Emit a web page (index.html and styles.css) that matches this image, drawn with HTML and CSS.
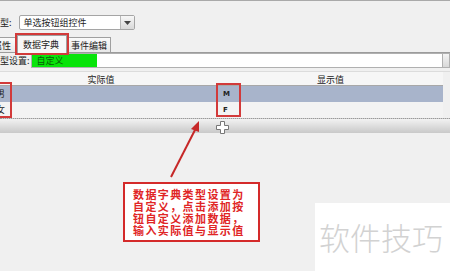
FILE: index.html
```html
<!DOCTYPE html>
<html lang="zh-CN">
<head>
<meta charset="UTF-8">
<title>数据字典设置</title>
<link rel="stylesheet" href="styles.css">
</head>
<body>

<div class="window">
  <div class="field-row type-row">
    <span class="label">类型:</span>
    <div class="select">
      <span class="select-text">单选按钮组控件</span>
      <span class="select-btn">
        <svg width="7" height="4" viewBox="0 0 7 4"><path d="M0 0 H7 L3.5 4 Z" fill="#444"/></svg>
      </span>
    </div>
  </div>

  <div class="tabs">
    <div class="tab">属性</div>
    <div class="tab active">数据字典</div>
    <div class="tab">事件编辑</div>
  </div>

  <div class="field-row setting-row">
    <span class="label">类型设置:</span>
    <div class="combo">
      <span class="combo-value">自定义</span>
      <span class="combo-btn"></span>
    </div>
  </div>

  <div class="grid">
    <div class="grid-head">实际值</div>
    <div class="grid-head">显示值</div>
    <div class="cell selected">男</div>
    <div class="cell selected code">M</div>
    <div class="cell">女</div>
    <div class="cell code">F</div>
  </div>

  <div class="grid-toolbar">
    <svg class="add-btn" width="13" height="13" viewBox="0 0 13 13">
      <path d="M4.5 0.5 H8.5 V4.5 H12.5 V8.5 H8.5 V12.5 H4.5 V8.5 H0.5 V4.5 H4.5 Z" fill="#fff" stroke="#777" stroke-width="1"/>
    </svg>
  </div>
</div>

<!-- annotations drawn over the screenshot -->
<span class="mark mark-left"></span>
<span class="mark mark-right"></span>

<svg class="arrow" width="450" height="271" viewBox="0 0 450 271">
  <line x1="171" y1="177" x2="196" y2="128" stroke="#c62828" stroke-width="2"/>
  <path d="M199 121 L191 129 L199 132 Z" fill="#c62828"/>
</svg>

<div class="callout">
  <p>数据字典类型设置为</p>
  <p>自定义，点击添加按</p>
  <p>钮自定义添加数据，</p>
  <p>输入实际值与显示值</p>
</div>

<div class="watermark">软件技巧</div>

</body>
</html>
```

FILE: styles.css
```css
body {
  font-family: "Noto Sans CJK SC", sans-serif;
  font-size: 9px;
  color: #222;
  background-color: #f0f0f0;
  margin: 0;
  padding: 0;
  width: 450px;
  height: 271px;
  overflow: hidden;
  position: relative;
}
.window {
  border-top: 1px solid #a9a9a9;
}
.field-row {
  display: flex;
  align-items: center;
  height: 15px;
}
.type-row {
  margin-top: 14px;
}
.label {
  margin-left: -9px;
  white-space: nowrap;
  line-height: 15px;
}
.type-row .label {
  margin-right: 7px;
}
.setting-row .label {
  margin-right: 1px;
}
.select {
  display: flex;
  align-items: stretch;
  width: 116px;
  height: 15px;
  box-sizing: border-box;
  border: 1px solid #a5a5a5;
  border-radius: 2px;
  background-color: #fff;
}
.select-text {
  flex: 1;
  padding-left: 4px;
  line-height: 13px;
}
.select-btn {
  width: 13px;
  display: flex;
  align-items: center;
  justify-content: center;
  border-left: 1px solid #b8b8b8;
  background: linear-gradient(#f7f7f7, #d9d9d9);
}
.tabs {
  display: flex;
  align-items: flex-end;
  margin-top: 4px;
  margin-left: -12px;
  height: 18px;
  border-bottom: 1px solid #9c9c9c;
}
.tab {
  height: 15px;
  line-height: 15px;
  padding: 0 3px;
  border: 1px solid #a0a0a0;
  border-bottom: none;
  box-sizing: border-box;
  background: linear-gradient(#fafafa, #e8e8e8);
  white-space: nowrap;
}
.tab:first-child {
  padding: 0 4px;
}
.tab.active {
  height: 18px;
  line-height: 18px;
  padding: 0 7px 0 5px;
  margin: 0 0 -1px 1px;
  background: #f7f7f7;
  outline: 2px solid #d23a3a;
  position: relative;
  z-index: 1;
}
.combo {
  flex: 1;
  display: flex;
  height: 15px;
  background-color: #fff;
  border: 1px solid #b0b0b0;
  box-sizing: border-box;
}
.combo-value {
  width: 65px;
  padding-left: 5px;
  box-sizing: border-box;
  background-color: #08e40a;
  color: #0a5a0a;
  line-height: 13px;
}
.combo-btn {
  margin-left: auto;
  width: 6px;
  border-left: 1px solid #b0b0b0;
  background: linear-gradient(#f4f4f4, #d8d8d8);
}
.grid {
  display: grid;
  grid-template-columns: 234px 225px;
  margin-top: 3px;
  margin-left: -16px;
  border-top: 1px solid #dcdcdc;
}
.grid-head {
  height: 14px;
  line-height: 12px;
  padding-top: 2px;
  box-sizing: border-box;
  text-align: center;
  background-color: #f6f6f6;
  border-bottom: 1px solid #a8a8a8;
}
.cell {
  height: 16px;
  line-height: 16px;
  padding-left: 12px;
  background-color: #f3f3f3;
}
.cell.selected {
  background-color: #a8b4cb;
}
.cell.code {
  padding-left: 5px;
  font-family: "DejaVu Sans", sans-serif;
  font-size: 7px;
  font-weight: bold;
}
.grid-toolbar {
  height: 15px;
  border-top: 1px dotted #9a9a9a;
  background: linear-gradient(#f2f2f2, #c9c9c9);
  padding-left: 216px;
  padding-top: 2px;
  box-sizing: border-box;
}
.add-btn {
  display: block;
}
.mark {
  position: absolute;
  border: 2px solid #d23a3a;
  box-sizing: border-box;
}
.mark-left {
  left: -2px;
  top: 82px;
  width: 14px;
  height: 36px;
}
.mark-right {
  left: 216px;
  top: 83px;
  width: 25px;
  height: 34px;
}
.arrow {
  position: absolute;
  left: 0;
  top: 0;
}
.callout {
  position: absolute;
  left: 123px;
  top: 182px;
  width: 137px;
  height: 60px;
  box-sizing: border-box;
  border: 2px solid #d42a2a;
  background-color: #fff;
  padding: 4px 0 0 8px;
  color: #e02525;
  font-size: 11px;
  font-weight: bold;
  letter-spacing: 1.4px;
  white-space: nowrap;
}
.callout p {
  margin: 0;
  height: 12px;
  line-height: 12px;
}
.watermark {
  position: absolute;
  left: 315px;
  top: 203px;
  width: 135px;
  height: 68px;
  background-color: #fff;
  color: #d2d2d2;
  font-size: 31px;
  font-weight: 300;
  line-height: 68px;
  padding-left: 4px;
  box-sizing: border-box;
  white-space: nowrap;
}
```
